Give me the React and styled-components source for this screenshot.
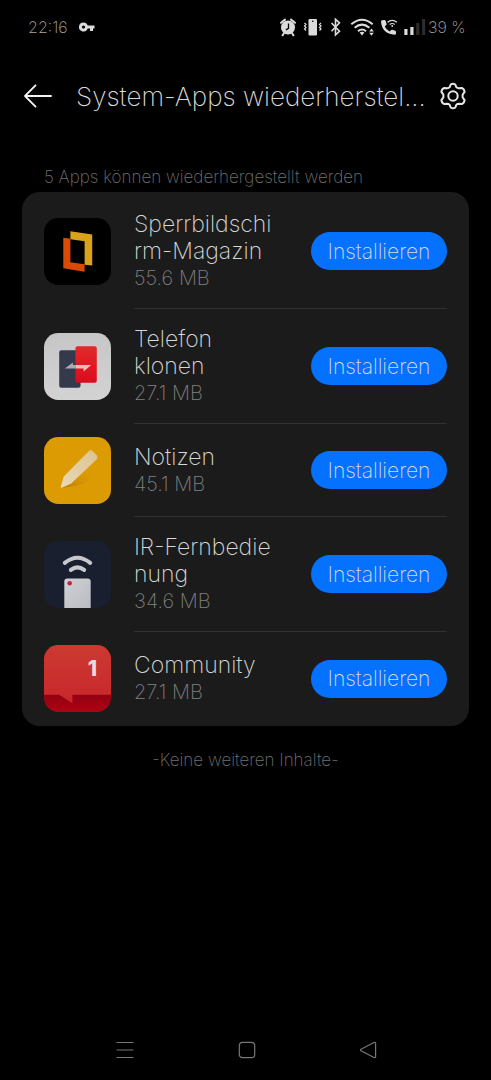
import * as React from 'react';
import styled, { createGlobalStyle } from 'styled-components';

const apps = [
  { name: 'Sperrbildschi\nrm-Magazin', size: '55.6 MB', Icon: MagazineIcon },
  { name: 'Telefon\nklonen', size: '27.1 MB', Icon: CloneIcon },
  { name: 'Notizen', size: '45.1 MB', Icon: NotesIcon },
  { name: 'IR-Fernbedie\nnung', size: '34.6 MB', Icon: RemoteIcon },
  { name: 'Community', size: '27.1 MB', Icon: CommunityIcon },
];

const App = () => {
  return (
    <>
      <GlobalStyle />
      <Screen>
        <StatusBar>
          <StatusGroup>
            <Clock>22:16</Clock>
            <KeyIcon />
          </StatusGroup>
          <StatusIcons />
          <Battery>39 %</Battery>
        </StatusBar>
        <Header>
          <IconButton type="button" aria-label="Zurück">
            <svg width="30" height="26" viewBox="0 0 30 26" fill="none" stroke="#f2f2f2" strokeWidth="1.8" strokeLinecap="round" strokeLinejoin="round">
              <path d="M28 13H2M12.500 2.300L2 13l10.500 10.700" />
            </svg>
          </IconButton>
          <Title>System-Apps wiederherstel...</Title>
          <IconButton type="button" aria-label="Einstellungen">
            <GearIcon />
          </IconButton>
        </Header>
        <main>
          <Summary>5 Apps können wiederhergestellt werden</Summary>
          <Card>
            {apps.map(({ name, size, Icon }) => (
              <Row key={name}>
                <Icon />
                <Body>
                  <Info>
                    <AppName>{name}</AppName>
                    <AppSize>{size}</AppSize>
                  </Info>
                  <Install type="button">Installieren</Install>
                </Body>
              </Row>
            ))}
          </Card>
          <EndNote>-Keine weiteren Inhalte-</EndNote>
        </main>
        <NavBar>
          <NavButton type="button" aria-label="Letzte Apps">
            <svg width="18" height="18" viewBox="0 0 18 18" stroke="#777" strokeWidth="1.2">
              <path d="M.5 1.500h17M.5 9h17M.5 16.500h17" />
            </svg>
          </NavButton>
          <NavButton type="button" aria-label="Startseite">
            <svg width="18" height="18" viewBox="0 0 18 18" fill="none" stroke="#777" strokeWidth="1.2">
              <rect x="1.300" y="1.300" width="15.400" height="15.400" rx="3.200" />
            </svg>
          </NavButton>
          <NavButton type="button" aria-label="Zurück">
            <svg width="18" height="18" viewBox="0 0 18 18" fill="none" stroke="#777" strokeWidth="1.2" strokeLinejoin="round">
              <path d="M15 1.500L2 8.300q-1 .7 0 1.400l13 6.800q1.600.5 1.600-1V2.500q0-1.500-1.600-1z" />
            </svg>
          </NavButton>
        </NavBar>
      </Screen>
    </>
  );
};

export default App;

function KeyIcon() {
  return (
    <svg width="16" height="10" viewBox="0 0 16 10" fill="#dcdcdc">
      <path fillRule="evenodd" d="M4.500.5a4.500 4.500 0 1 0 4.200 6H11V9h3V6.500h1.500v-3H8.700A4.500 4.500 0 0 0 4.500.5zm0 2.900a1.600 1.600 0 1 1 0 3.200 1.600 1.600 0 0 1 0-3.200z" />
    </svg>
  );
}

function StatusIcons() {
  return (
    <svg width="147" height="20" viewBox="279 17 147 20" fill="#dcdcdc">
      {/* alarm clock */}
      <circle cx="288" cy="27.500" r="7" />
      <path d="M281 22.800l4-3.200M295 22.800l-4-3.200M283.800 33.500l-1.300 1.800M292.200 33.500l1.300 1.800" stroke="#dcdcdc" strokeWidth="2" strokeLinecap="round" />
      <path d="M288.500 23.500v4.800l-2.600 1.600" stroke="#000" strokeWidth="1.300" fill="none" />
      {/* vibrating phone */}
      <rect x="308.500" y="19" width="8.500" height="16.500" rx="1.300" />
      <circle cx="312.800" cy="21.300" r=".8" fill="#000" />
      <path d="M304.500 23l1.500 1.500-1.500 1.500 1.500 1.500-1.500 1.500 1.500 1.500M321 23l-1.500 1.500 1.500 1.500-1.500 1.500 1.500 1.500-1.500 1.500" stroke="#dcdcdc" strokeWidth="1.200" fill="none" />
      {/* bluetooth */}
      <path d="M331.500 23l8 8.200-4 3.800V19.300l4 3.600-8 8.300" stroke="#dcdcdc" strokeWidth="1.600" fill="none" />
      {/* wifi */}
      <g stroke="#dcdcdc" strokeWidth="2" fill="none">
        <path d="M351.300 24.200q10.700-9 21.400 0" />
        <path d="M354.600 27.800q7.400-6.300 14.800 0" />
        <path d="M358 31.200q4-3.400 8 0" />
      </g>
      <path d="M359.600 32.600q2.400-1.500 4.800 0L362 35.500z" />
      <path d="M369.200 31.400l2.300-3 2.300 3zM369.200 32.800l2.300 3 2.300-3z" />
      {/* wifi call */}
      <path d="M382 20.200l2.400-.3q.9 0 1.200.8l1 3.200q.1.700-.4 1.200l-1.500 1.300q1.500 3.300 5 5.100l1.500-1.500q.5-.5 1.200-.2l2.800 1q.8.300.8 1.100v1.500q-.1 1.400-1.500 1.400-12.500-.8-13.500-13.200.1-1.200 1-1.400z" />
      <path d="M387.500 22.300q4.700-4 9.400 0M389.700 24.500q2.500-2 5 0" stroke="#dcdcdc" strokeWidth="1.200" fill="none" />
      <circle cx="392.200" cy="26" r=".9" />
      {/* signal strength */}
      <rect x="404.300" y="29" width="3.200" height="6" />
      <rect x="410.300" y="27" width="3.200" height="8" />
      <rect x="416.200" y="23" width="3.200" height="12" fill="#2b2b2b" />
      <rect x="422" y="19" width="3.200" height="16" fill="#2b2b2b" />
    </svg>
  );
}

function GearIcon() {
  return (
    <svg width="28" height="28" viewBox="0 0 28 28" fill="none" stroke="#e6e6e6" strokeWidth="2" strokeLinejoin="round">
      <path d="M11.700 2.500Q14 .8 16.300 2.500L17.300 5.200Q18.300 6.300 19.800 6.300L22.700 5.900Q25.300 7 25.600 9.900L23.800 12.400Q23.300 14 23.800 15.600L25.600 18.100Q25.300 21 22.700 22.100L19.800 21.700Q18.300 21.700 17.300 22.800L16.300 25.500Q14 27.200 11.700 25.500L10.700 22.800Q9.700 21.700 8.200 21.700L5.300 22.100Q2.700 21 2.400 18.100L4.200 15.600Q4.700 14 4.200 12.400L2.400 9.900Q2.700 7 5.300 5.900L8.200 6.300Q9.700 6.300 10.700 5.200Z" />
      <circle cx="14" cy="14" r="4.700" />
    </svg>
  );
}

function MagazineIcon() {
  return (
    <AppIcon viewBox="0 0 66 66" aria-hidden="true">
      <rect width="66" height="66" rx="14" fill="#000" />
      <path d="M19 19.500l7 1V43.500l14 2V53l-21-3.500z" fill="#d94a05" />
      <path d="M26 13l21.500 3.200v30.500L40 46V23l-14-2z" fill="#d9a21b" />
    </AppIcon>
  );
}

function CloneIcon() {
  return (
    <AppIcon viewBox="0 0 66 66" aria-hidden="true">
      <defs>
        <linearGradient id="cloneBg" x1="0" y1="0" x2="0" y2="1">
          <stop offset="0" stopColor="#c6c6c6" />
          <stop offset="1" stopColor="#d3d3d3" />
        </linearGradient>
        <linearGradient id="cloneRed" x1="0" y1="0" x2="0" y2="1">
          <stop offset="0" stopColor="#e32a2a" />
          <stop offset="1" stopColor="#da0b1d" />
        </linearGradient>
      </defs>
      <rect width="66" height="66" rx="14" fill="url(#cloneBg)" />
      <rect x="15" y="17" width="21" height="37" rx="2" fill="#343a4b" />
      <rect x="31" y="13" width="21" height="36" rx="2" fill="url(#cloneRed)" />
      <path d="M31 35H20.500l8-6v2.500H31z" fill="#aaacb3" />
      <path d="M31 31.500h15.500l-7.500 6.500v-3h-8z" fill="#e9bcbc" />
    </AppIcon>
  );
}

function NotesIcon() {
  return (
    <AppIcon viewBox="0 0 66 66" aria-hidden="true">
      <defs>
        <linearGradient id="pencil" x1="1" y1="0" x2="0" y2="1">
          <stop offset="0" stopColor="#dcc391" />
          <stop offset="1" stopColor="#ead9b6" />
        </linearGradient>
        <linearGradient id="pencilShade" x1="0" y1="1" x2="1" y2="0">
          <stop offset="0" stopColor="#a96f00" stopOpacity=".8" />
          <stop offset="1" stopColor="#dc9b03" stopOpacity="0" />
        </linearGradient>
      </defs>
      <rect width="66" height="66" rx="14" fill="#dc9b03" />
      <path d="M17 50l24-16 5 6q-4 8-29 10z" fill="url(#pencilShade)" />
      <path d="M16.500 48.800l3-9.800L44 14q2-2 4 0l4 4q1.800 2 0 4L26.500 46l-9 4q-1.500.3-1-1.200z" fill="url(#pencil)" />
    </AppIcon>
  );
}

function RemoteIcon() {
  return (
    <AppIcon viewBox="0 0 66 66" aria-hidden="true">
      <defs>
        <linearGradient id="remote" x1="0" y1="0" x2="1" y2="1">
          <stop offset="0" stopColor="#cfd1d6" />
          <stop offset="1" stopColor="#b9bbc1" />
        </linearGradient>
      </defs>
      <rect width="66" height="66" rx="14" fill="#1a1f30" />
      <path d="M20 66V40q0-3 3-3h20q3 0 3 3v26z" fill="url(#remote)" />
      <circle cx="25.300" cy="41.700" r="2.200" fill="#c91f38" />
      <path d="M20.500 21.500q12.500-10 25 0M26.500 28.500q6.500-5 13 0" stroke="#c6c8ce" strokeWidth="4" strokeLinecap="round" fill="none" />
    </AppIcon>
  );
}

function CommunityIcon() {
  return (
    <AppIcon viewBox="0 0 66 66" aria-hidden="true">
      <defs>
        <linearGradient id="communityTop" x1="0" y1="0" x2="0" y2="1">
          <stop offset="0" stopColor="#cb3a31" />
          <stop offset="1" stopColor="#c9272b" />
        </linearGradient>
        <linearGradient id="communityFoot" x1="0" y1="0" x2="0" y2="1">
          <stop offset=".7" stopColor="#8f0010" />
          <stop offset="1" stopColor="#ad0414" />
        </linearGradient>
        <clipPath id="communityShape">
          <rect width="66" height="66" rx="14" />
        </clipPath>
      </defs>
      <g clipPath="url(#communityShape)">
        <rect width="66" height="66" fill="url(#communityFoot)" />
        <path d="M0 0h66v49H28v8.500L15 49H0z" fill="url(#communityTop)" />
      </g>
      <text x="43" y="31" fontFamily="Inter, sans-serif" fontSize="21" fontWeight="800" fill="#e8dcdc">1</text>
    </AppIcon>
  );
}

const GlobalStyle = createGlobalStyle`
  * {
    box-sizing: border-box;
  }
  body {
    margin: 0;
    background-color: #000;
    color: #d8d8d8;
    font-family: Inter, "Open Sans", sans-serif;
    font-weight: 200;
  }
  button {
    font: inherit;
    color: inherit;
    border: 0;
    padding: 0;
    cursor: pointer;
  }
`;
const Screen = styled.div`
  display: flex;
  flex-direction: column;
  min-height: 100vh;
  main {
    flex: 1;
    padding: 0 22px;
  }
`;
const StatusBar = styled.div`
  display: flex;
  align-items: center;
  height: 54px;
  padding: 0 25px 0 28px;
  color: #a8a8a8;
  font-size: 16px;
`;
const StatusGroup = styled.div`
  display: flex;
  align-items: center;
  gap: 10px;
  margin-right: auto;
`;
const Clock = styled.time`
  width: 41px;
`;
const Battery = styled.span`
  width: 38px;
  margin-left: 2px;
  white-space: nowrap;
`;
const Header = styled.header`
  display: flex;
  align-items: center;
  height: 84px;
  padding: 0 24px 0 23px;
`;
const IconButton = styled.button`
  display: flex;
  background: none;
`;
const Title = styled.h1`
  flex: 1;
  margin: 0 12px 0 23px;
  overflow: hidden;
  white-space: nowrap;
  font-size: 26px;
  font-weight: 200;
`;
const Summary = styled.p`
  margin: 28px 22px 4px;
  font-size: 17px;
  line-height: 22px;
  color: #707070;
`;
const Card = styled.ul`
  margin: 0;
  padding: 2px 22px 1px;
  list-style: none;
  border-radius: 18px;
  background-color: #1b1b1b;
`;
const Row = styled.li`
  display: flex;
  align-items: center;
  gap: 23px;
`;
const AppIcon = styled.svg`
  flex: none;
  width: 67px;
  height: 67px;
`;
const Body = styled.div`
  flex: 1;
  display: flex;
  align-items: center;
  justify-content: space-between;
  min-height: 93px;
  border-bottom: 1px solid #303030;
  ${Row}:last-child & {
    border-bottom: 0;
  }
`;
const Info = styled.div`
  padding: 17px 0;
`;
const AppName = styled.div`
  white-space: pre-line;
  font-size: 23px;
  line-height: 27px;
`;
const AppSize = styled.div`
  font-size: 20px;
  line-height: 26px;
  color: #808080;
`;
const Install = styled.button`
  width: 136px;
  height: 38px;
  border-radius: 19px;
  background-color: #0571ff;
  font-size: 21px;
`;
const EndNote = styled.p`
  margin: 23px 0 0;
  text-align: center;
  font-size: 17px;
  line-height: 22px;
  color: #707070;
`;
const NavBar = styled.nav`
  display: flex;
  align-items: center;
  justify-content: space-between;
  height: 60px;
  padding: 0 114px 0 116px;
`;
const NavButton = styled.button`
  display: flex;
  background: none;
`;
